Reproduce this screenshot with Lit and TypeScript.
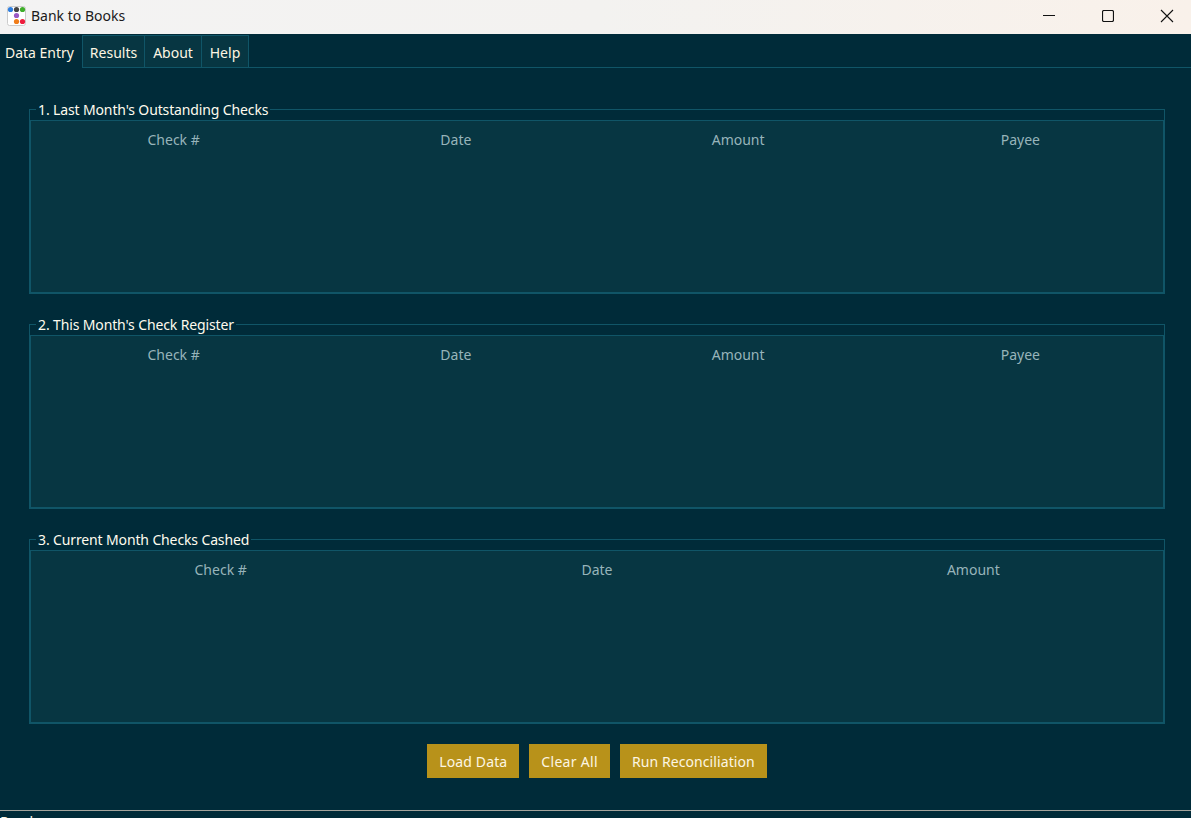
import { LitElement, html, css, svg } from "lit";
import { customElement } from "lit/decorators.js";

const groups = [
  { title: "1. Last Month's Outstanding Checks", cols: ["Check #", "Date", "Amount", "Payee"] },
  { title: "2. This Month's Check Register", cols: ["Check #", "Date", "Amount", "Payee"] },
  { title: "3. Current Month Checks Cashed", cols: ["Check #", "Date", "Amount"] },
];

@customElement("app-root")
export class AppRoot extends LitElement {
  static styles = css`
    :host {
      display: block;
      width: 1191px;
      height: 818px;
      overflow: hidden;
      background: #002b39;
      font-family: "Noto Sans", "Open Sans", sans-serif;
      font-size: 14px;
      color: #fdf6e3;
    }
    .title {
      height: 34px;
      box-sizing: border-box;
      padding-bottom: 3px;
      display: flex;
      align-items: center;
      background: linear-gradient(90deg, #f3f3f3, #f3f2f0 50%, #f9f1ea);
      color: #1a1a1a;
    }
    .appicon { margin-left: 7px; width: 19px; height: 20px; flex: none; }
    .name { margin-left: 5px; font-size: 14px; flex: 1; }
    .win { display: flex; margin-right: -5px; }
    .win span { width: 59px; height: 30px; display: flex; align-items: center; justify-content: center; }
    .tabs {
      height: 34px;
      display: flex;
      padding-top: 1px;
      box-sizing: border-box;
    }
    .tab {
      display: flex;
      align-items: center;
      justify-content: center;
      box-sizing: border-box;
      height: 33px;
      padding-top: 2px;
      border: 1px solid #105567;
      border-left: 0;
      background: #073642;
    }
    .tab.on { background: #002b39; border-top: 0; border-bottom: 0; padding-right: 3px; }
    .fill { flex: 1; border-bottom: 1px solid #105567; }
    .body { padding: 31px 26px 0 29px; }
    fieldset {
      margin: 0 0 20px;
      padding: 0;
      height: 195px;
      box-sizing: border-box;
      border: 1px solid #105567;
      min-width: 0;
    }
    legend {
      margin-left: 6px;
      padding: 0 2px;
      height: 21px;
      line-height: 21px;
      box-sizing: border-box;
      letter-spacing: -0.13px;
      color: #fffbee;
    }
    .tree {
      height: 173px;
      box-sizing: border-box;
      padding: 0 1.5px;
      border: 1px solid #105567;
      background: #073642;
      display: grid;
      grid-auto-flow: column;
      grid-auto-columns: 1fr;
      align-content: start;
    }
    .tree div { text-align: center; color: #97b4ba; height: 38px; line-height: 38px; }
    .actions { display: flex; justify-content: center; gap: 10px; margin-top: 1px; }
    .btn {
      height: 34px;
      display: flex;
      align-items: center;
      padding: 0 12px;
      background: #b8921a;
      color: #fdf6e3;
      letter-spacing: 0.14px;
    }
    .btn.wide { letter-spacing: 0.3px; }
    .btn.tight { letter-spacing: 0.09px; }
    .status {
      margin-top: 32px;
      border-top: 1px solid #a3a39c;
      height: 30px;
      padding-top: 1px;
      line-height: 20px;
    }
  `;

  private icon() {
    const dots: [number, number, string][] = [
      [3.5, 3.5, "#2f7fe0"], [9.5, 3.5, "#444"], [15.5, 3.5, "#3fae2a"],
      [9.5, 9.5, "#9b59c4"], [9.5, 15.5, "#f07d1a"], [15.5, 15.5, "#ee1c3c"],
    ];
    return html`<svg class="appicon" viewBox="0 0 19 20">
      <rect x=".5" y=".5" width="18" height="19" rx="2" fill="#fff" stroke="#ccc"></rect>
      ${dots.map(([x, y, c]) => svg`<circle cx=${x} cy=${y} r="2.6" fill=${c}></circle>`)}
    </svg>`;
  }

  render() {
    const tabs = [["Data Entry", 83], ["Results", 62], ["About", 57], ["Help", 47]] as [string, number][];
    return html`
      <div class="title">
        ${this.icon()}
        <span class="name">Bank to Books</span>
        <div class="win">
          <span><svg width="12" height="12" viewBox="0 0 12 12"><path d="M0 5.5H12" stroke="#111" fill="none"></path></svg></span>
          <span><svg width="12" height="12" viewBox="0 0 12 12"><rect x=".5" y=".5" width="11" height="11" rx="1.5" stroke="#111" stroke-width="1.2" fill="none"></rect></svg></span>
          <span><svg width="14" height="14" viewBox="0 0 14 14"><path d="M1 1L13 13M13 1L1 13" stroke="#111" stroke-width="1.1" fill="none"></path></svg></span>
        </div>
      </div>
      <div class="tabs">
        ${tabs.map(([t, w], i) => html`<div class="tab ${i === 0 ? "on" : ""}" style="width:${w}px">${t}</div>`)}
        <div class="fill"></div>
      </div>
      <div class="body">
        ${groups.map((g) => html`<fieldset>
          <legend>${g.title}</legend>
          <div class="tree">${g.cols.map((c) => html`<div>${c}</div>`)}</div>
        </fieldset>`)}
        <div class="actions">
          <div class="btn">Load Data</div>
          <div class="btn wide">Clear All</div>
          <div class="btn tight">Run Reconciliation</div>
        </div>
      </div>
      <div class="status">Ready</div>
    `;
  }
}
